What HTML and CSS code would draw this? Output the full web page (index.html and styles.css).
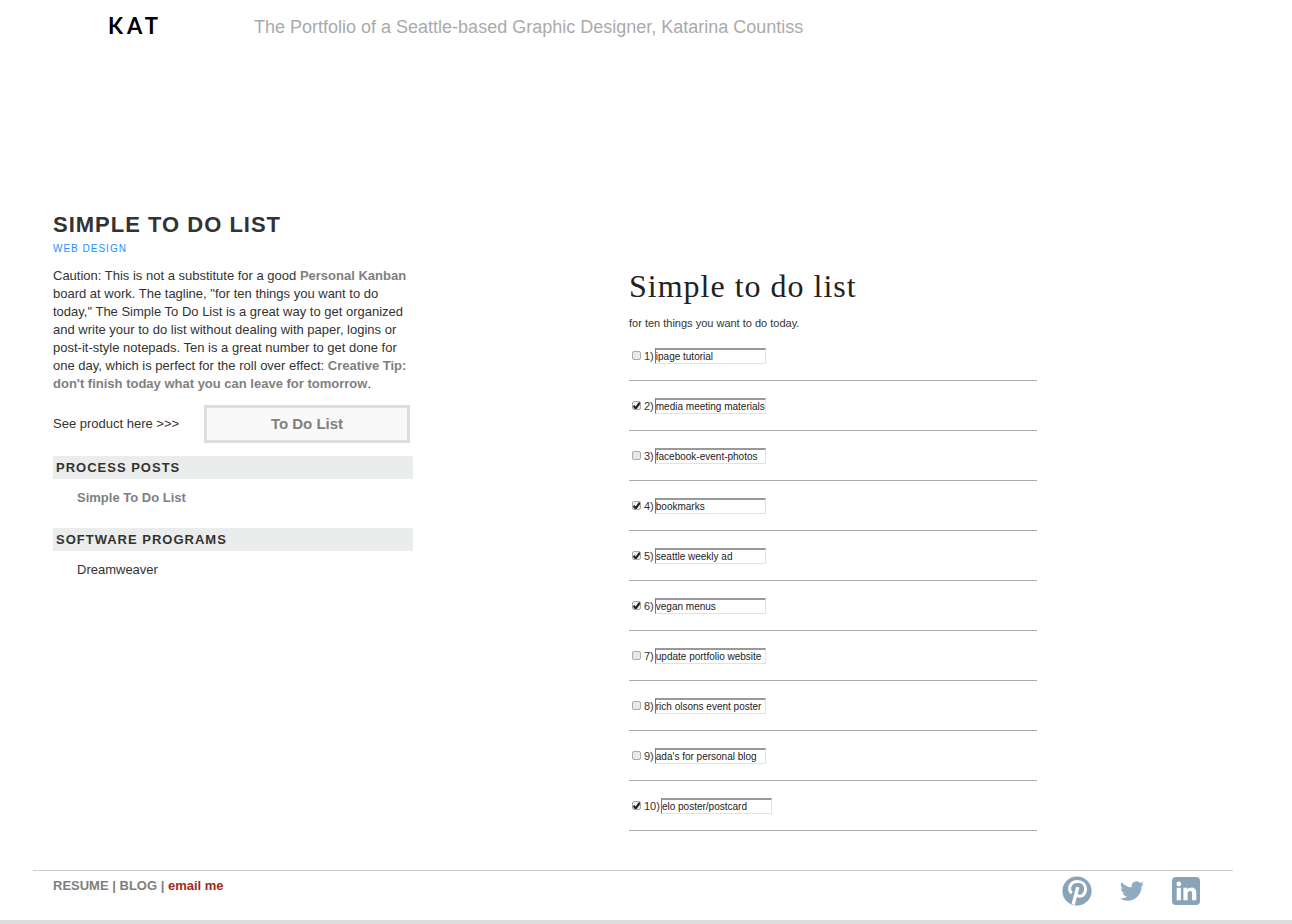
FILE: index.html
```html
<!DOCTYPE html>
<html lang="en">
<head>
  <meta charset="UTF-8">
  <title>Simple To Do List - Katarina Countiss</title>
  <meta name="viewport" content="width=device-width, initial-scale=1.0">
  <link rel="stylesheet" href="styles.css">
</head>
<body>
  <div class="page">
    <header class="header">
      <a href="#" class="logo">KAT</a>
      <p class="tagline">The Portfolio of a Seattle-based Graphic Designer, Katarina Countiss</p>
    </header>

    <main class="content">
      <section class="info">
        <h1>SIMPLE TO DO LIST</h1>
        <p class="category">WEB DESIGN</p>
        <p class="description">Caution: This is not a substitute for a good <a href="#">Personal Kanban</a> board at work. The tagline, "for ten things you want to do today," The Simple To Do List is a great way to get organized and write your to do list without dealing with paper, logins or post-it-style notepads. Ten is a great number to get done for one day, which is perfect for the roll over effect: <a href="#">Creative Tip: don't finish today what you can leave for tomorrow</a>.</p>

        <div class="product">
          <span>See product here &gt;&gt;&gt;</span>
          <a href="#" class="product-button">To Do List</a>
        </div>

        <h2>PROCESS POSTS</h2>
        <p class="entry"><a href="#">Simple To Do List</a></p>
        <h2>SOFTWARE PROGRAMS</h2>
        <p class="entry">Dreamweaver</p>
      </section>

      <section class="todo">
        <h2 class="todo-title">Simple to do list</h2>
        <p class="todo-tagline">for ten things you want to do today.</p>
        <ul class="todo-list">
          <li><input type="checkbox" id="c1"><label for="c1">1)</label><input type="text" aria-label="Item 1" value="ipage tutorial"></li>
          <li><input type="checkbox" id="c2" checked><label for="c2">2)</label><input type="text" aria-label="Item 2" value="media meeting materials"></li>
          <li><input type="checkbox" id="c3"><label for="c3">3)</label><input type="text" aria-label="Item 3" value="facebook-event-photos"></li>
          <li><input type="checkbox" id="c4" checked><label for="c4">4)</label><input type="text" aria-label="Item 4" value="bookmarks"></li>
          <li><input type="checkbox" id="c5" checked><label for="c5">5)</label><input type="text" aria-label="Item 5" value="seattle weekly ad"></li>
          <li><input type="checkbox" id="c6" checked><label for="c6">6)</label><input type="text" aria-label="Item 6" value="vegan menus"></li>
          <li><input type="checkbox" id="c7"><label for="c7">7)</label><input type="text" aria-label="Item 7" value="update portfolio website"></li>
          <li><input type="checkbox" id="c8"><label for="c8">8)</label><input type="text" aria-label="Item 8" value="rich olsons event poster"></li>
          <li><input type="checkbox" id="c9"><label for="c9">9)</label><input type="text" aria-label="Item 9" value="ada's for personal blog"></li>
          <li><input type="checkbox" id="c10" checked><label for="c10">10)</label><input type="text" aria-label="Item 10" value="elo poster/postcard"></li>
        </ul>
      </section>
    </main>

    <footer class="footer">
      <nav class="footer-links">
        <a href="#">RESUME</a> | <a href="#">BLOG</a> | <a href="#" class="email">email me</a>
      </nav>
      <div class="social">
        <a href="#" aria-label="Pinterest">
          <svg width="30" height="30" viewBox="0 0 30 30">
            <circle cx="15" cy="15" r="14.6" fill="#89a3b8"/>
            <path d="M9.6 17.2C5.2 12.2 8.6 5.6 15.4 5.6c5.200 0 8.200 3.200 8.200 7.200 0 4.400-2.600 7.500-5.900 7.500-1.800 0-2.900-.9-3.400-1.900" fill="none" stroke="#fff" stroke-width="3"/>
            <path d="M15.800 11L11.200 28.500" fill="none" stroke="#fff" stroke-width="3.400"/>
          </svg>
        </a>
        <a href="#" aria-label="Twitter">
          <svg width="24" height="24" viewBox="0 0 24 24">
            <path fill="#91abc0" d="M23.950 4.570a10 10 0 0 1-2.820.770 4.960 4.960 0 0 0 2.160-2.720c-.950.550-2 .950-3.130 1.180a4.920 4.920 0 0 0-8.380 4.480C7.690 8.090 4.070 6.130 1.640 3.160a4.920 4.920 0 0 0 1.520 6.570 4.900 4.900 0 0 1-2.230-.610v.060a4.920 4.920 0 0 0 3.950 4.830 5 5 0 0 1-2.210.080 4.940 4.940 0 0 0 4.600 3.420A9.870 9.870 0 0 1 0 19.540a14 14 0 0 0 7.550 2.210c9.050 0 14-7.500 14-13.980 0-.210 0-.420-.020-.630a9.940 9.940 0 0 0 2.420-2.570z"/>
          </svg>
        </a>
        <a href="#" aria-label="LinkedIn">
          <svg width="28" height="28" viewBox="0 0 28 28">
            <rect width="28" height="28" rx="4" fill="#89a3b8"/>
            <circle cx="6.800" cy="6.900" r="2.400" fill="#fff"/>
            <path fill="#fff" d="M4.700 10.800h4.200v12.400H4.700zM11.400 10.800h4v1.800c.8-1.300 2.200-2.100 4-2.100 3.600 0 4.900 2.200 4.900 5.800v6.900h-4.200v-6.300c0-1.700-.4-3-2-3-1.700 0-2.500 1.200-2.500 3v6.300h-4.200z"/>
          </svg>
        </a>
      </div>
    </footer>
  </div>
  <div class="bottom-bar"></div>
</body>
</html>
```

FILE: styles.css
```css
* {
  box-sizing: border-box;
}

body {
  margin: 0;
  min-height: 100vh;
  display: flex;
  flex-direction: column;
  background: #fff;
  color: #333;
  font-family: "Liberation Sans", Arial, sans-serif;
  font-size: 13px;
  line-height: 18px;
}

h1, h2, p, ul {
  margin: 0;
  padding: 0;
}

a {
  color: #808080;
  font-weight: bold;
  text-decoration: none;
}

.page {
  width: 100%;
  max-width: 1233px;
  padding-left: 33px;
  flex-grow: 1;
}

.header {
  display: flex;
  align-items: flex-start;
  padding: 12px 0 0 75px;
}

.logo {
  width: 146px;
  color: #000;
  font-family: Lato, sans-serif;
  font-size: 22px;
  line-height: 28px;
  letter-spacing: 4px;
}

.tagline {
  color: #aaa;
  font-size: 18px;
  line-height: 30px;
}

.content {
  display: grid;
  grid-template-columns: 360px minmax(0, 408px);
  column-gap: 216px;
  padding: 168px 20px 0;
}

h1 {
  font-size: 22px;
  line-height: 30px;
  letter-spacing: 1px;
}

.category {
  color: #1e90ff;
  font-size: 10px;
  line-height: 18px;
  letter-spacing: 1px;
}

.description {
  margin-top: 9px;
}

.product {
  display: flex;
  align-items: center;
  justify-content: space-between;
  padding-right: 3px;
  margin: 12px 0 13px;
}

.product-button {
  width: 206px;
  border: 3px solid #ddd;
  background: #f9f9f9;
  font-size: 15px;
  line-height: 32px;
  text-align: center;
}

.info h2 {
  padding-left: 3px;
  background: #ebecec;
  font-size: 13px;
  line-height: 23px;
  letter-spacing: 1px;
}

.entry {
  padding: 10px 0 21px 24px;
}

.todo {
  padding-top: 60px;
}

.todo-title {
  color: #222;
  font-family: Georgia, "Liberation Serif", serif;
  font-size: 32px;
  font-weight: normal;
  line-height: 32px;
  letter-spacing: 1px;
}

.todo-tagline {
  margin-top: 13px;
  font-size: 11px;
  line-height: 16px;
}

.todo-list {
  list-style: none;
}

.todo-list li {
  display: flex;
  align-items: center;
  height: 50px;
  padding-left: 3px;
  border-bottom: 1px solid #aaa;
}

.todo-list label {
  margin: 0 1px 0 3px;
  font-size: 11px;
}

.todo-list input[type="text"] {
  width: 111px;
  height: 16px;
  padding: 0;
  border: 1px solid #e2e2e2;
  border-top: 2px solid #999;
  border-left: 1px solid #777;
  background: #fff;
  color: #222;
  font-family: inherit;
  font-size: 10px;
}

.todo-list input[type="checkbox"] {
  appearance: none;
  width: 9px;
  height: 9px;
  margin: 0;
  border: 1px solid #aaa;
  border-radius: 2px;
  background: #e9e9e9;
}

/* tick mark */
.todo-list input[type="checkbox"]:checked {
  background: #eee url("data:image/svg+xml,%3Csvg xmlns='http://www.w3.org/2000/svg' viewBox='0 0 8 8'%3E%3Cpath d='M1 4l2 2.500L7 1' fill='none' stroke='%23222' stroke-width='2'/%3E%3C/svg%3E") center / 8px 8px no-repeat;
}

.footer {
  display: flex;
  justify-content: space-between;
  margin-top: 39px;
  padding: 5px 33px 0 20px;
  border-top: 1px solid #ccc;
  color: #808080;
}

.footer-links {
  padding-top: 1px;
  font-weight: bold;
}

.footer-links .email {
  color: #a02a20;
}

.social {
  display: flex;
  align-items: center;
  gap: 28px;
}

.social svg {
  display: block;
}

.bottom-bar {
  height: 4px;
  background: #ddd;
}
```
